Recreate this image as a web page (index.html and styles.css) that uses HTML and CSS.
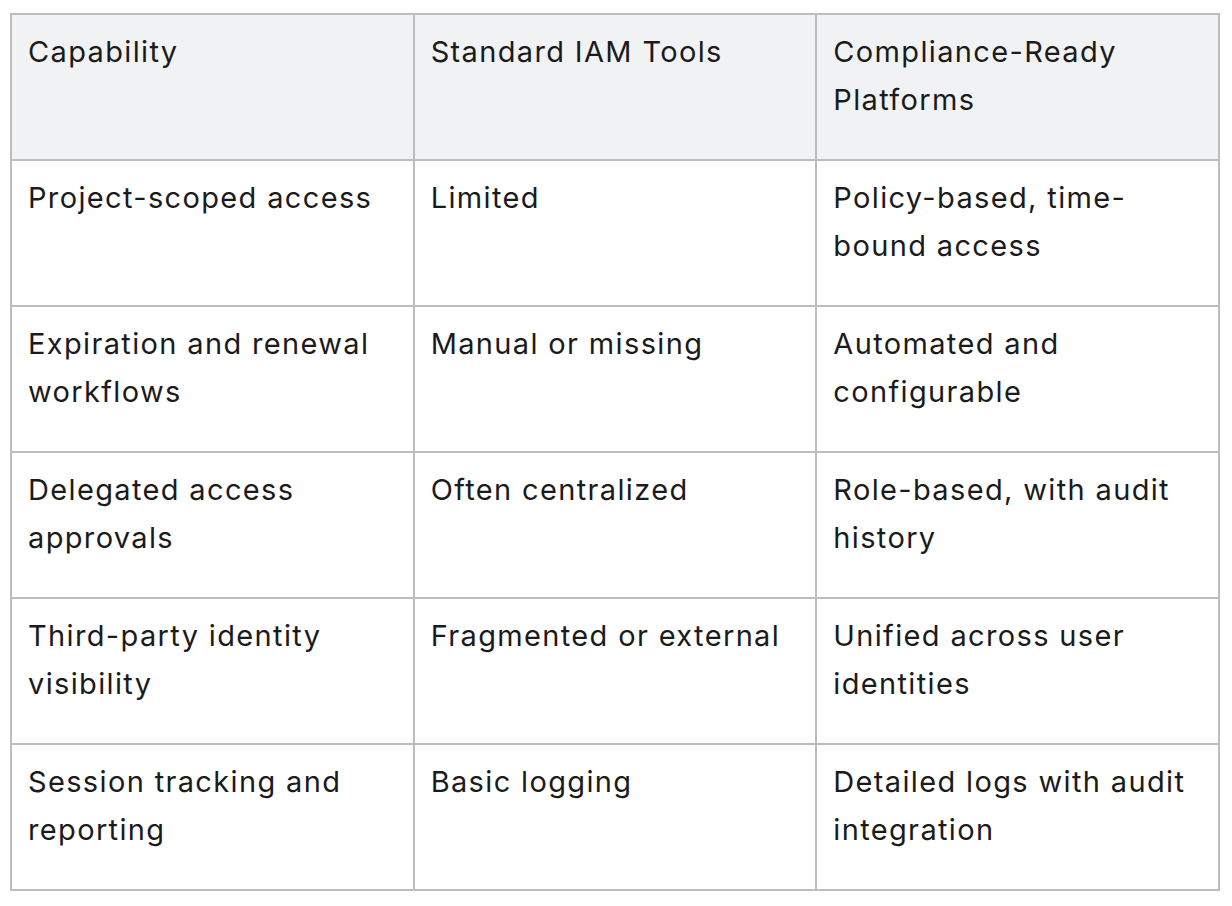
FILE: index.html
```html
<!DOCTYPE html>
<html>
<head>
<meta charset="utf-8">
<link rel="stylesheet" href="styles.css">
</head>
<body>
<table class="cmp">
  <colgroup><col class="c"><col class="c"><col class="c"></colgroup>
  <thead>
    <tr><th>Capability</th><th>Standard IAM Tools</th><th>Compliance-Ready Platforms</th></tr>
  </thead>
  <tbody>
    <tr><td>Project-scoped access</td><td>Limited</td><td>Policy-based, time-bound access</td></tr>
    <tr><td>Expiration and renewal workflows</td><td>Manual or missing</td><td>Automated and configurable</td></tr>
    <tr><td>Delegated access approvals</td><td>Often centralized</td><td>Role-based, with audit history</td></tr>
    <tr><td>Third-party identity visibility</td><td>Fragmented or external</td><td>Unified across user identities</td></tr>
    <tr><td>Session tracking and reporting</td><td>Basic logging</td><td>Detailed logs with audit integration</td></tr>
  </tbody>
</table>
</body>
</html>
```
FILE: styles.css
```css
html, body {
  margin: 0;
  background: #ffffff;
}
body {
  padding: 13px 12px 0 10px;
  font-family: Inter, "Noto Sans", sans-serif;
  color: #1b1b1b;
}
.cmp {
  border-collapse: collapse;
  table-layout: fixed;
  width: 1210px;
}
.cmp .c {
  width: 33.333%;
}
.cmp th,
.cmp td {
  border: 2px solid #bdbdbd;
  padding: 13px 16px 35px 16px;
  height: 96px;
  font-size: 29px;
  line-height: 48px;
  letter-spacing: 1.35px;
  font-weight: 400;
  text-align: left;
  vertical-align: top;
}
.cmp th {
  background: #f1f2f4;
}
```
